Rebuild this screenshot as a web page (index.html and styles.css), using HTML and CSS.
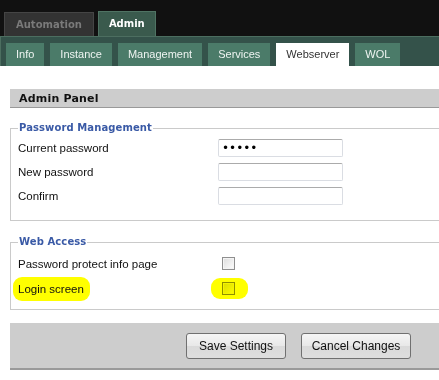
FILE: index.html
```html
<!DOCTYPE html>
<html lang="en">
  <head>
    <meta charset="UTF-8" />
    <meta name="viewport" content="width=device-width, initial-scale=1.0" />
    <title>Admin Panel</title>
    <link rel="stylesheet" href="styles.css">
  </head>
  <body>
    <div class="topbar">
      <div class="main-tab">Automation</div>
      <div class="main-tab active">Admin</div>
    </div>
    <div class="sub-bar">
      <div class="sub-tab">Info</div>
      <div class="sub-tab">Instance</div>
      <div class="sub-tab">Management</div>
      <div class="sub-tab">Services</div>
      <div class="sub-tab active">Webserver</div>
      <div class="sub-tab">WOL</div>
    </div>

    <div class="panel">
      <div class="panel-title">Admin Panel</div>

      <fieldset class="group">
        <legend>Password Management</legend>
        <div class="row">
          <label>Current password</label>
          <input class="text-input" type="password" value="12345" />
        </div>
        <div class="row">
          <label>New password</label>
          <input class="text-input" type="password" />
        </div>
        <div class="row">
          <label>Confirm</label>
          <input class="text-input" type="password" />
        </div>
      </fieldset>

      <fieldset class="group web">
        <legend>Web Access</legend>
        <div class="row check-row">
          <label>Password protect info page</label>
          <span class="check-cell"><input class="check" type="checkbox" /></span>
        </div>
        <div class="row check-row">
          <label><span class="marker text-marker">Login screen</span></label>
          <span class="check-cell"><span class="marker box-marker"><input class="check" type="checkbox" /></span></span>
        </div>
      </fieldset>

      <div class="actions">
        <button class="button">Save Settings</button>
        <button class="button">Cancel Changes</button>
      </div>
    </div>
  </body>
</html>
```

FILE: styles.css
```css
body {
  margin: 0;
  padding: 0;
  background-color: #fff;
  font-family: "Liberation Sans", Arial, sans-serif;
  font-size: 11.5px;
  color: #111;
  width: 439px;
  overflow: hidden;
}

.topbar {
  height: 36px;
  background-color: #111;
  display: flex;
  align-items: flex-end;
  gap: 4px;
  padding-left: 4px;
}

.main-tab {
  font-family: "DejaVu Sans", Verdana, sans-serif;
  font-weight: bold;
  font-size: 10px;
  height: 23px;
  line-height: 24px;
  padding: 0 11px;
  background-color: #333;
  color: #7a7a7a;
  border: 1px solid #454545;
  border-bottom: none;
}

.main-tab.active {
  height: 24px;
  padding: 0 10px;
  background-color: #3a5a4d;
  border-color: #4f7363;
  color: #fff;
}

.sub-bar {
  height: 29px;
  background-color: #34524a;
  border-top: 1px solid #4c6e60;
  border-left: 1px solid #4c6e60;
  display: flex;
  align-items: flex-end;
  gap: 6px;
  padding-left: 5px;
}

.sub-tab {
  height: 23px;
  line-height: 23px;
  padding: 0 10px;
  font-size: 11px;
  background-color: #4b7b69;
  color: #eef4f1;
}

.sub-tab.active {
  background-color: #fff;
  color: #333;
}

.panel {
  margin-top: 23px;
  padding-left: 10px;
}

.panel-title {
  height: 18px;
  line-height: 19px;
  background-color: #cdcdcd;
  border-bottom: 1px solid #999;
  padding-left: 9px;
  font-family: "DejaVu Sans", Verdana, sans-serif;
  font-weight: bold;
  font-size: 11px;
  letter-spacing: 0.2px;
  color: #111;
}

.group {
  margin: 13px 0 0 0;
  padding: 1px 0 12px 7px;
  border: 1px solid #cacaca;
  border-right: none;
  min-width: 0;
}

.group legend {
  padding: 0 1px;
  height: 14px;
  line-height: 14px;
  font-family: "DejaVu Sans", Verdana, sans-serif;
  font-weight: bold;
  font-size: 10px;
  letter-spacing: 0.1px;
  color: #3a5aa6;
}

.group.web {
  margin-top: 14px;
  padding-top: 2px;
  padding-bottom: 8px;
}

.row {
  display: grid;
  grid-template-columns: 200px auto;
  align-items: center;
  height: 24px;
}

.check-row {
  height: 25px;
}

.text-input {
  width: 125px;
  height: 18px;
  box-sizing: border-box;
  margin: 0;
  padding: 0 3px;
  border: 1px solid #dadde3;
  border-top-color: #ababab;
  border-radius: 2px;
  font-size: 12px;
  font-family: "DejaVu Sans", Verdana, sans-serif;
  color: #000;
  outline: none;
}

.check-cell {
  display: flex;
  align-items: center;
  padding-left: 4px;
}

.check {
  appearance: none;
  -webkit-appearance: none;
  width: 13px;
  height: 13px;
  margin: 0;
  border: 1px solid #8f8f8f;
  background: linear-gradient(135deg, #dcdcdc, #fdfdfd);
  box-shadow: inset 0 0 0 1px #f4f4f4;
}

.marker {
  background-color: #ffff00;
  border-radius: 9px;
  display: inline-block;
}

.text-marker {
  padding: 5px 6px 5px 5px;
  margin-left: -5px;
  line-height: 14px;
}

.box-marker {
  padding: 4px 13px 4px 11px;
  margin-left: -11px;
  display: flex;
}

.box-marker .check {
  mix-blend-mode: multiply;
}

.actions {
  margin-top: 13px;
  height: 47px;
  box-sizing: border-box;
  background-color: #cdcdcd;
  border-bottom: 2px solid #9a9a9a;
  display: flex;
  justify-content: flex-end;
  align-items: flex-start;
  gap: 15px;
  padding: 10px 28px 0 0;
}

.button {
  height: 26px;
  padding: 0;
  white-space: nowrap;
  font-family: "Liberation Sans", Arial, sans-serif;
  font-size: 12px;
  color: #111;
  background: linear-gradient(#f5f5f5, #e8e8e8 50%, #dadada 51%, #dedede);
  border: 1px solid #707070;
  border-radius: 3px;
  cursor: pointer;
}

.button:first-child {
  width: 100px;
}

.button:last-child {
  width: 110px;
}
```
